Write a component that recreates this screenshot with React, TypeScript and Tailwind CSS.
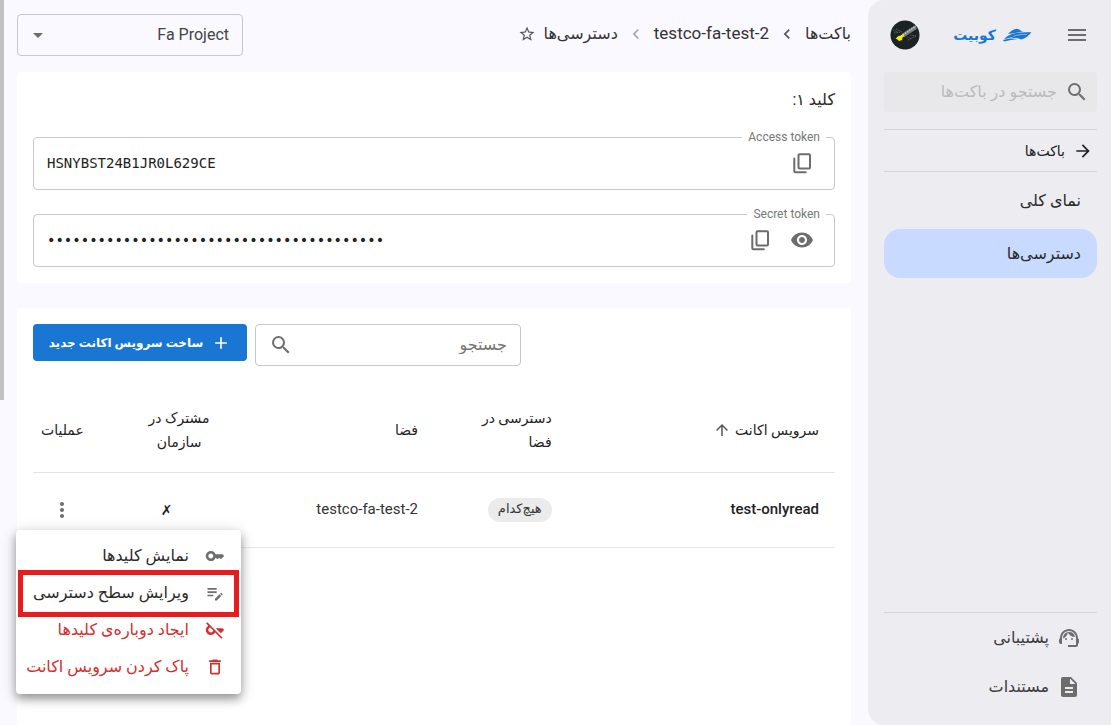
import type { ReactNode } from "react";
import {
  MdAdd,
  MdArrowDropDown,
  MdArrowForward,
  MdArrowUpward,
  MdChevronLeft,
  MdDescription,
  MdEditNote,
  MdKey,
  MdKeyOff,
  MdMenu,
  MdMoreVert,
  MdSearch,
  MdStarBorder,
  MdSupportAgent,
  MdVisibility,
} from "react-icons/md";

function Logo() {
  return (
    <a href="#" className="flex items-center gap-1.5 text-sm font-bold text-[#1976d2]">
      <svg viewBox="0 0 30 14" className="h-[14px] w-[30px]" fill="currentColor" aria-hidden="true">
        <path d="M6 6C8.500 3 11.500 1 15 .7l4 1.500-1 .7 3.500.900L6 6z" />
        <path d="M4 9.200C6 7.500 9 6 12.500 5.200c5-1 11-1.200 17-.9C27 7.500 23.500 10.500 19 11.600c-3-1.500-6.500-2-10.500-1.300L13 8.300 2 11.200z" />
        <path d="M.8 12.200c5-1.700 10-2.200 14.500-.9-4.300.4-8.800 1-12.800 2.300z" />
        <path d="M12 8c4-1.300 8-1.800 13-1.500" stroke="#edecf1" strokeWidth=".5" fill="none" />
      </svg>
      کوبیت
    </a>
  );
}

function Avatar() {
  return (
    <svg viewBox="0 0 30 30" className="h-[30px] w-[30px]" role="img" aria-label="حساب کاربری">
      <circle cx="15" cy="15" r="14.500" fill="#1a2224" />
      <g fill="none" strokeDasharray="1.500 1">
        <path d="M3 10l5 2M6 9l6 3M4 13l7-1" stroke="#5d6362" />
        <path d="M17 17l5 2M20 15l6 1M18 20l8-4" stroke="#6d5c58" />
      </g>
      <path d="M13 15.500l13-8.500" stroke="#77797a" strokeWidth="4" />
      <path d="M13 15l13-9" stroke="#c9cbc8" strokeWidth="1.500" strokeDasharray="1.500 1" />
      <path d="M5.500 18.500l3-2.500 2-.5 2.500-1.500 1.500 2-2 1.500-.5 2.500-3 1-1.500-1.500z" fill="#eef000" />
    </svg>
  );
}

function CopyIcon() {
  return (
    <svg
      viewBox="0 0 24 24"
      className="size-6"
      fill="none"
      stroke="currentColor"
      strokeWidth="2"
      strokeLinecap="round"
      aria-hidden="true"
    >
      <rect x="8.500" y="3.200" width="11.500" height="14.200" rx="1" />
      <path d="M4.300 7.500v12.700a1 1 0 0 0 1 1h10.500" />
    </svg>
  );
}

function TrashIcon() {
  return (
    <svg viewBox="0 0 24 24" className="size-5 shrink-0" fill="currentColor" aria-hidden="true">
      <path d="M6 19c0 1.100.9 2 2 2h8c1.100 0 2-.9 2-2V7H6v12zM8 9h8v10H8V9zm7.500-5l-1-1h-5l-1 1H5v2h14V4h-3.500z" />
    </svg>
  );
}

function TokenField({
  id,
  label,
  type,
  value,
  children,
}: {
  id: string;
  label: string;
  type: string;
  value: string;
  children: ReactNode;
}) {
  return (
    <fieldset className="min-w-0 rounded border border-[#c8c8c8] px-2 pb-1.5">
      <legend className="px-1.5 text-xs leading-3 text-[#777]">
        <label htmlFor={id}>{label}</label>
      </legend>
      <div dir="ltr" className="flex h-10 items-center gap-0.5 pr-1 pl-[5px]">
        <input
          id={id}
          type={type}
          value={value}
          readOnly
          className="min-w-0 flex-1 bg-transparent font-['DejaVu_Sans_Mono',monospace] text-sm text-[#222] outline-none"
        />
        {children}
      </div>
    </fieldset>
  );
}

function IconButton({ label, children }: { label: string; children: ReactNode }) {
  return (
    <button type="button" aria-label={label} className="flex size-10 items-center justify-center text-2xl text-[#6d6d6d]">
      {children}
    </button>
  );
}

function Sidebar() {
  return (
    <aside className="flex w-[243px] shrink-0 flex-col rounded-l-2xl bg-[#edecf1] ps-[14px] pe-4">
      <div className="flex h-[70px] items-center justify-between pe-1.5 ps-2">
        <button type="button" aria-label="منو" className="text-2xl text-[#6d6d6d]">
          <MdMenu />
        </button>
        <Logo />
        <Avatar />
      </div>
      <label className="mt-0.5 flex h-10 items-center gap-2 rounded bg-[#e8e8ea] ps-2">
        <MdSearch className="shrink-0 text-2xl text-[#6d6d6d]" />
        <input
          type="search"
          aria-label="جستجو در باکت‌ها"
          placeholder="جستجو در باکت‌ها"
          className="min-w-0 flex-1 bg-transparent text-base outline-none placeholder:text-[#bbb]"
        />
      </label>
      <a
        href="#"
        className="mt-[17px] flex h-[43px] items-center gap-2 border-y border-[#d5d5dc] ps-1 text-sm text-[#222]"
      >
        <MdArrowForward className="text-xl" />
        باکت‌ها
      </a>
      <nav className="mt-2 text-base text-[#2b2b2b]">
        <a href="#" className="flex h-[49px] items-center px-4 pb-2">
          نمای کلی
        </a>
        <a href="#" className="flex h-[49px] items-center rounded-2xl bg-[#c8daff] px-4">
          دسترسی‌ها
        </a>
      </nav>
      <nav className="mt-auto mb-[14px] border-t border-[#d5d5dc] text-base text-[#3c3c3c]">
        <a href="#" className="flex h-[49px] items-center gap-2 px-4">
          <MdSupportAgent className="text-2xl text-[#6d6d6d]" />
          پشتیبانی
        </a>
        <a href="#" className="flex h-[49px] items-center gap-2 px-4">
          <MdDescription className="text-2xl text-[#6d6d6d]" />
          مستندات
        </a>
      </nav>
    </aside>
  );
}

function ActionsMenu() {
  const item = "relative flex h-[37px] w-full items-center gap-4 px-4 text-base whitespace-nowrap";
  return (
    <div
      role="menu"
      className="absolute top-[57px] -left-[17px] z-10 w-[225px] rounded bg-white py-2 text-[#2b2b2b] shadow-[0_5px_8px_rgba(0,0,0,0.3),0_3px_16px_rgba(0,0,0,0.2)]"
    >
      <button type="button" role="menuitem" className={item}>
        <MdKey className="shrink-0 text-xl text-[#6d6d6d]" />
        نمایش کلیدها
      </button>
      <button type="button" role="menuitem" className={item}>
        <MdEditNote className="shrink-0 text-xl text-[#6d6d6d]" />
        ویرایش سطح دسترسی
        <span className="absolute -inset-y-[5px] inset-x-0.5 border-[5px] border-[#e81b1e]" />
      </button>
      <button type="button" role="menuitem" className={`${item} text-[#d32f2f]`}>
        <MdKeyOff className="shrink-0 text-xl" />
        ایجاد دوباره‌ی کلیدها
      </button>
      <button type="button" role="menuitem" className={`${item} text-[#d32f2f]`}>
        <TrashIcon />
        پاک کردن سرویس اکانت
      </button>
    </div>
  );
}

function AccountsTable() {
  return (
    <table className="mt-[23px] w-full table-fixed text-sm text-[#222]">
      <thead>
        <tr className="h-[83px] border-b border-[#e3e3e3] leading-6">
          <th className="w-1/3 px-4 text-start font-normal">
            <button type="button" className="flex items-center gap-1">
              سرویس اکانت
              <MdArrowUpward className="text-lg text-[#555]" />
            </button>
          </th>
          <th className="w-1/6 px-4 text-start font-normal">
            دسترسی در
            <br />
            فضا
          </th>
          <th className="w-[26%] px-4 text-start font-normal">فضا</th>
          <th className="w-1/6 px-4 font-normal">
            <div className="w-fit text-center">
              مشترک در
              <br />
              سازمان
            </div>
          </th>
          <th className="text-center font-normal">عملیات</th>
        </tr>
      </thead>
      <tbody>
        <tr className="h-[75px] border-b border-[#e8e8e8]">
          <td className="px-4 text-[15px] font-medium">test-onlyread</td>
          <td className="px-4">
            <span className="inline-flex h-6 items-center rounded-full bg-[#ebebeb] px-2.5 text-[13px] text-[#333]">
              هیچ‌کدام
            </span>
          </td>
          <td className="px-4 text-[15px] text-[#333]">
            <bdi>testco-fa-test-2</bdi>
          </td>
          <td className="pe-4 text-center">✗</td>
          <td className="relative">
            <div className="flex justify-center">
              <button type="button" aria-label="عملیات" className="text-2xl text-[#6d6d6d]">
                <MdMoreVert />
              </button>
            </div>
            <ActionsMenu />
          </td>
        </tr>
      </tbody>
    </table>
  );
}

export default function App() {
  return (
    <div
      dir="rtl"
      lang="fa"
      className="flex min-h-screen bg-[#faf9ff] font-['Roboto','DejaVu_Sans',sans-serif] text-[#2b2b2b]"
    >
      <Sidebar />
      <main className="flex min-w-0 flex-1 flex-col ps-[17px] pe-[13px]">
        <header className="flex h-[72px] items-start justify-between pt-[14px]">
          <nav className="flex h-10 items-center gap-2 text-base text-[#333]">
            <a href="#">باکت‌ها</a>
            <MdChevronLeft className="text-xl text-[#555]" />
            <a href="#" className="text-[17px]">
              <bdi>testco-fa-test-2</bdi>
            </a>
            <MdChevronLeft className="text-xl text-[#aaa]" />
            <span>دسترسی‌ها</span>
            <button type="button" aria-label="نشان کردن" className="text-lg text-[#555]">
              <MdStarBorder />
            </button>
          </nav>
          <div className="relative w-[226px]">
            <select
              aria-label="پروژه"
              className="h-[42px] w-full appearance-none rounded border border-[#c8c8cc] bg-transparent px-[13px] text-base text-[#444]"
            >
              <option>Fa Project</option>
            </select>
            <MdArrowDropDown className="pointer-events-none absolute top-[9px] left-[9px] text-2xl text-[#6d6d6d]" />
          </div>
        </header>

        <section className="rounded bg-white p-4">
          <h2 className="text-base leading-6">کلید ۱:</h2>
          <div className="mt-[19px] flex flex-col gap-[18px]">
            <TokenField id="access" label="Access token" type="text" value="HSNYBST24B1JR0L629CE">
              <IconButton label="کپی">
                <CopyIcon />
              </IconButton>
            </TokenField>
            <TokenField id="secret" label="Secret token" type="password" value={"x".repeat(40)}>
              <IconButton label="کپی">
                <CopyIcon />
              </IconButton>
              <IconButton label="نمایش">
                <MdVisibility />
              </IconButton>
            </TokenField>
          </div>
        </section>

        <section className="mt-[25px] flex-1 rounded-t bg-white p-4">
          <div className="flex items-start justify-end gap-2">
            <label className="flex h-[42px] w-[266px] items-center rounded border border-[#c8c8c8] px-[13px]">
              <input
                type="search"
                aria-label="جستجو"
                placeholder="جستجو"
                className="min-w-0 flex-1 bg-transparent text-base outline-none placeholder:text-[#757575]"
              />
              <MdSearch className="shrink-0 text-2xl text-[#6d6d6d]" />
            </label>
            <button
              type="button"
              className="flex h-[37px] w-[214px] items-center justify-center gap-2 rounded bg-[#1976d2] text-xs font-bold whitespace-nowrap text-white"
            >
              <MdAdd className="text-xl" />
              ساخت سرویس اکانت جدید
            </button>
          </div>
          <AccountsTable />
        </section>
      </main>
      <div className="w-1 shrink-0">
        <div className="h-[400px] bg-[#c1c1c1]" />
      </div>
    </div>
  );
}
